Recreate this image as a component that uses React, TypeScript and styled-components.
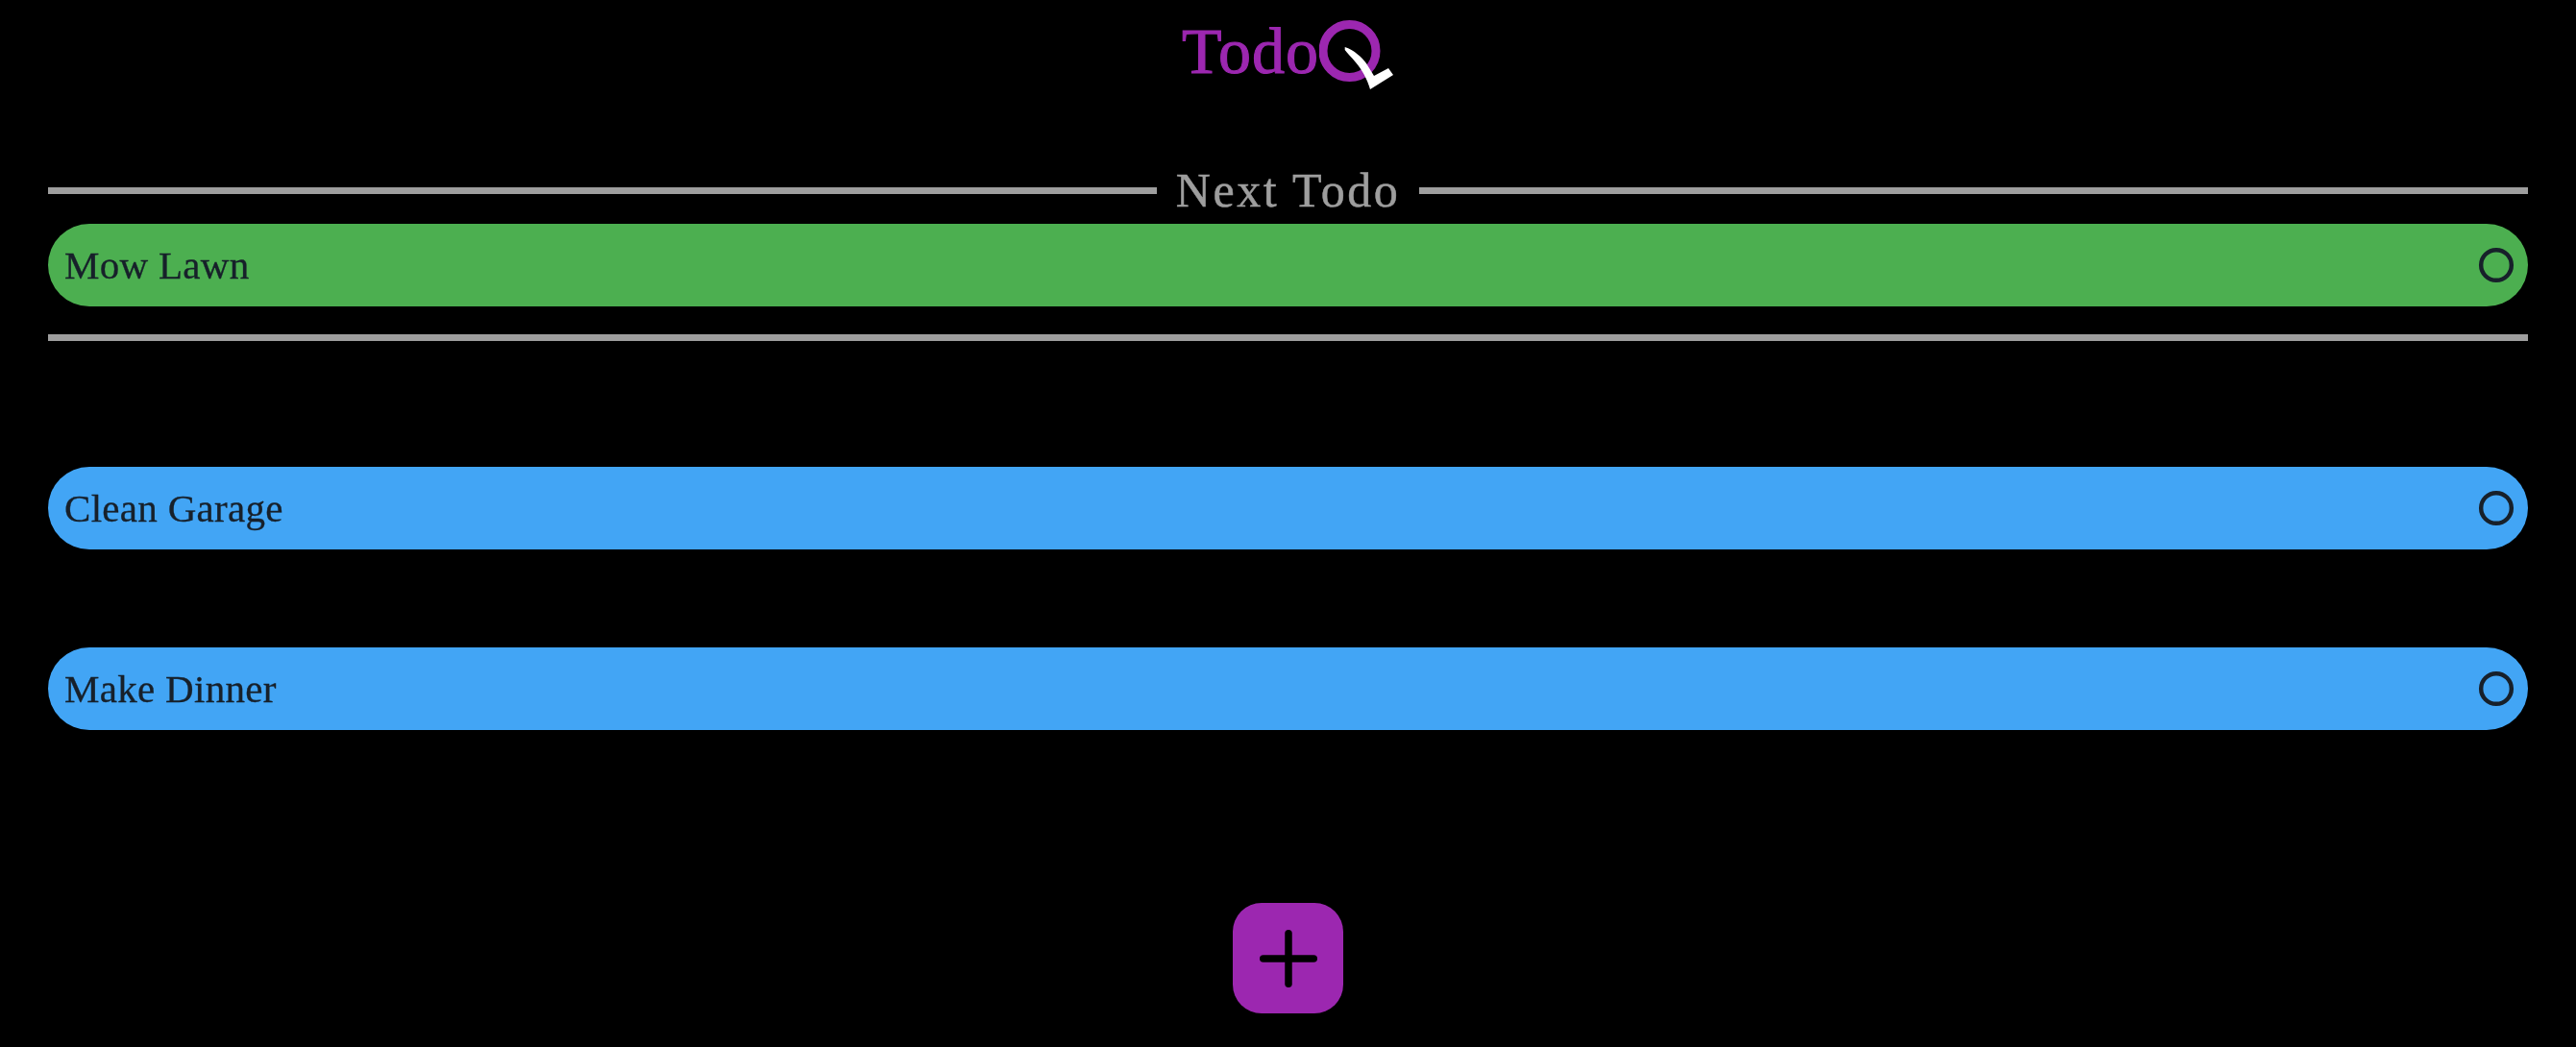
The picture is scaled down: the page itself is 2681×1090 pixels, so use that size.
import React from "react";
import styled, { createGlobalStyle } from "styled-components";
import { Circle, Plus } from "lucide-react";

const Global = createGlobalStyle`
  html, body { margin: 0; padding: 0; background: #000; height: 100%; }
  #root { height: 100%; }
`;

const Page = styled.main`
  box-sizing: border-box;
  height: 1090px;
  padding: 0 50px;
  background: #000;
  font-family: "Liberation Serif", "DejaVu Serif", serif;
  display: flex;
  flex-direction: column;
  overflow: hidden;
  filter: blur(0.7px);
`;

const Header = styled.header`
  height: 170px;
  flex: none;
  display: flex;
  justify-content: center;
  align-items: flex-start;
  padding-top: 14px;
  box-sizing: border-box;
`;

const Logo = styled.div`
  display: flex;
  align-items: flex-start;
  height: 90px;
`;

const LogoText = styled.span`
  font-size: 68px;
  line-height: 78px;
  letter-spacing: 1px;
  color: #9c27b0;
  -webkit-text-stroke: 1.1px #9c27b0;
`;

const Divider = styled.div`
  display: flex;
  align-items: center;
  gap: 20px;
  height: 56px;
  flex: none;
`;

const DividerLine = styled.span`
  flex: 1;
  height: 7px;
  background: #9e9e9e;
`;

const DividerLabel = styled.span`
  font-size: 50px;
  letter-spacing: 2.5px;
  line-height: 56px;
  color: #9e9e9e;
  -webkit-text-stroke: 0.5px #9e9e9e;
`;

const BottomLine = styled.hr`
  flex: none;
  height: 7px;
  margin: 29px 0 0;
  border: 0;
  background: #9e9e9e;
`;

const Row = styled.div<{ $color: string; $gap: number }>`
  flex: none;
  box-sizing: border-box;
  height: 86px;
  margin-top: ${(p) => p.$gap}px;
  padding: 0 14px 0 17px;
  border-radius: 43px;
  background: ${(p) => p.$color};
  display: flex;
  align-items: center;
  justify-content: space-between;
  color: #17202a;
`;

const RowLabel = styled.span`
  font-size: 41px;
  line-height: 46px;
  letter-spacing: 0.3px;
  -webkit-text-stroke: 0.3px #17202a;
`;

const AddButton = styled.button`
  flex: none;
  align-self: center;
  width: 115px;
  height: 115px;
  margin-top: 180px;
  padding: 0;
  border: 0;
  border-radius: 30px;
  background: #9c27b0;
  color: #000;
  display: flex;
  align-items: center;
  justify-content: center;
`;

const LogoMark = () => (
  <svg width="78" height="84" viewBox="0 0 78 84" aria-hidden="true">
    <circle cx="31.5" cy="39" r="27.5" fill="none" stroke="#9c27b0" strokeWidth="9" />
    <path
      d="M26.7 35 C36 38 45 46 49 52 L57 65 L72 57 L77 64 L53 79 C50 68 44 58 38 51 C33 45 29 41 26.7 38 Z"
      fill="#fff"
    />
  </svg>
);

export default function App() {
  return (
    <Page>
      <Global />
      <Header>
        <Logo>
          <LogoText>Todo</LogoText>
          <LogoMark />
        </Logo>
      </Header>
      <Divider>
        <DividerLine />
        <DividerLabel>Next Todo</DividerLabel>
        <DividerLine />
      </Divider>
      <Row $color="#4caf50" $gap={7}>
        <RowLabel>Mow Lawn</RowLabel>
        <Circle size={38} strokeWidth={2.8} color="#17202a" />
      </Row>
      <BottomLine />
      <Row $color="#42a5f5" $gap={131}>
        <RowLabel>Clean Garage</RowLabel>
        <Circle size={38} strokeWidth={2.8} color="#17202a" />
      </Row>
      <Row $color="#42a5f5" $gap={102}>
        <RowLabel>Make Dinner</RowLabel>
        <Circle size={38} strokeWidth={2.8} color="#17202a" />
      </Row>
      <AddButton aria-label="Add todo">
        <Plus size={90} strokeWidth={2} />
      </AddButton>
    </Page>
  );
}
